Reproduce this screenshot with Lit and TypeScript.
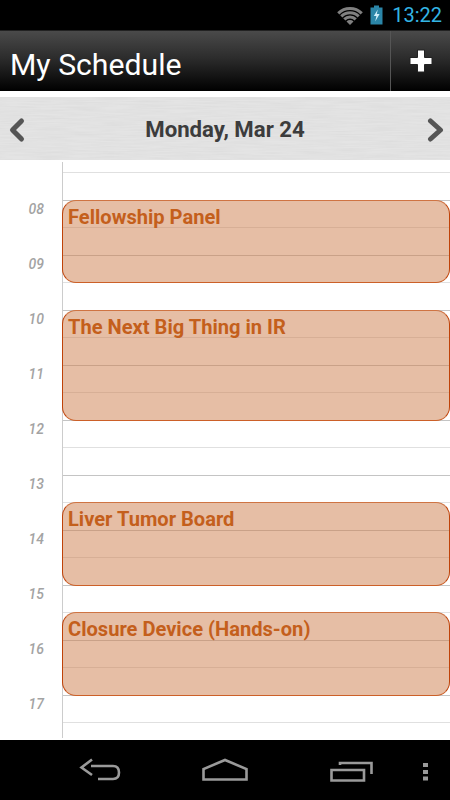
import { LitElement, html, css } from "lit";
import { customElement } from "lit/decorators.js";

const LABELS = ["08", "09", "10", "11", "12", "13", "14", "15", "16", "17"];
const EVENTS = [
  { title: "Fellowship Panel", start: 3, span: 3 },
  { title: "The Next Big Thing in IR", start: 7, span: 4 },
  { title: "Liver Tumor Board", start: 14, span: 3 },
  { title: "Closure Device (Hands-on)", start: 18, span: 3 },
];
const ROWS = 21;

@customElement("app-root")
export class AppRoot extends LitElement {
  static styles = css`
    :host { display: block; width: 450px; height: 800px; overflow: hidden; background: #fff; font-family: Roboto, "Liberation Sans", sans-serif; }
    .page { display: flex; flex-direction: column; height: 800px; }
    .status { height: 30px; background: #000; display: flex; align-items: center; justify-content: flex-end; padding-right: 8px; flex: none; }
    .wifi { margin-right: 7px; }
    .batt { margin-right: 9px; }
    .clock { color: #33b5e5; font-size: 20px; line-height: 30px; }
    .action { height: 61px; flex: none; display: flex; align-items: stretch; background: linear-gradient(#4a4a4a, #2c2c2c 45%, #000); box-sizing: border-box; border-top: 1px solid #222; }
    .title { flex: 1; color: #fff; font-size: 30.2px; line-height: 67px; padding-left: 10px; }
    .add { width: 59px; display: flex; align-items: center; justify-content: center; border-left: 1px solid #555; }
    .gap { height: 6px; flex: none; background: #fff; }
    .date { position: relative; overflow: hidden; height: 63px; flex: none; display: flex; align-items: center; justify-content: space-between; padding: 0 6px; background: #e4e4e4; }
    .texture { position: absolute; inset: 0; width: 100%; height: 100%; }
    .date span { position: relative; color: #3c3c3c; font-weight: 700; font-size: 22.2px; }
    .date svg.arrow { position: relative; }
    .cal { flex: 1; min-height: 0; overflow: hidden; display: grid; grid-template-columns: 62px 1fr; grid-template-rows: 12px repeat(${ROWS}, 27.5px); }
    .axis { grid-column: 1; grid-row: 1 / -1; border-right: 1px solid #ccc; width: 62px; height: 576px; margin-top: 2px; }
    .line { grid-column: 2; border-top: 1px solid #e0e0e0; margin-left: 1px; }
    .line.hourline { border-top-color: #c4c4c4; }
    .hour { grid-column: 1; font-size: 14px; font-style: italic; font-weight: 500; color: #a3a3a3; justify-self: end; padding-right: 18px; line-height: 17px; margin-top: 1px; }
    .event { grid-column: 2; z-index: 1; box-sizing: border-box; margin-bottom: -1px; background: rgba(205, 125, 75, 0.5); border: 1px solid #bf4208; border-top-color: #cf7443; border-bottom-color: #cc6028; border-radius: 14px; color: #c45f1c; font-weight: 700; font-size: 20.1px; line-height: 22px; padding: 5px 0 0 5px; overflow: hidden; }
    .nav { height: 60px; flex: none; background: #000; display: flex; }
    .nav svg { display: block; }
  `;

  render() {
    return html`<div class="page">
      <div class="status">
        <svg class="wifi" width="26" height="20" viewBox="0 0 26 20"><g fill="none" stroke="#808080" stroke-width="3.100"><path d="M1.300 8.300A16.500 16.500 0 0 1 24.700 8.300"/><path d="M4.300 11.300A12.300 12.300 0 0 1 21.700 11.300"/><path d="M7.300 14.300A8.100 8.100 0 0 1 18.700 14.300"/></g><path d="M9.500 16.500A5 5 0 0 1 16.500 16.500L13 20Z" fill="#808080"/></svg>
        <svg class="batt" width="13" height="20" viewBox="0 0 13 20"><path d="M4 0.500h5v2h3.500v17H0.500v-17H4z" fill="#2b86a8"/><path d="M7.800 4.500 3.800 11h2.600L5.200 16.500 9.600 9H6.800z" fill="#cfeefa"/></svg>
        <span class="clock">13:22</span>
      </div>
      <div class="action">
        <div class="title">My Schedule</div>
        <div class="add"><svg width="24" height="24" viewBox="0 0 24 24"><path d="M8.500 1h7v7.500H23v7h-7.500V23h-7v-7.500H1v-7h7.500z" fill="#fff" stroke="#222" stroke-width="1"/></svg></div>
      </div>
      <div class="gap"></div>
      <div class="date">
        <svg class="texture"><filter id="brush"><feTurbulence type="fractalNoise" baseFrequency="0.03 0.7" numOctaves="2" seed="4"/><feColorMatrix values="0 0 0 0 0.5 0 0 0 0 0.5 0 0 0 0 0.5 0.3 0 0 0 -0.09"/></filter><rect width="100%" height="100%" filter="url(#brush)"/></svg>
        <svg class="arrow" width="20" height="28" viewBox="0 0 20 28"><path d="M15.500 6 6.500 15l9 9" fill="none" stroke="#555" stroke-width="5" stroke-linecap="round" stroke-linejoin="round"/></svg>
        <span>Monday, Mar 24</span>
        <svg class="arrow" width="20" height="28" viewBox="0 0 20 28"><path d="M6.500 6l10 9-10 9" fill="none" stroke="#555" stroke-width="5" stroke-linecap="round" stroke-linejoin="round"/></svg>
      </div>
      <div class="cal">
        <div class="axis"></div>
        ${Array.from({ length: ROWS }, (_, i) => html`<div class="line ${i % 2 ? "hourline" : ""}" style="grid-row:${i + 2}"></div>`)}
        ${LABELS.map((l, i) => html`<div class="hour" style="grid-row:${3 + i * 2} / span 2">${l}</div>`)}
        ${EVENTS.map((e) => html`<div class="event" style="grid-row:${e.start} / span ${e.span}">${e.title}</div>`)}
      </div>
      <div class="nav">
        <svg width="450" height="60" viewBox="0 0 450 60" fill="none" stroke="#9a9a9a" stroke-width="2.600">
          <path d="M91 26H113Q119 26 119 32.500Q119 39 113 39H98"/><path d="M92 19.500 81.500 27.500 92 35"/>
          <path d="M203.500 39.500V29L225 20 246.500 29V39.500Z"/>
          <path d="M331.500 30H364V40.500H331.500Z"/><path d="M340 25V23H371.500V34"/>
          <g fill="#9a9a9a" stroke="none"><rect x="423" y="23" width="5" height="4"/><rect x="423" y="30" width="5" height="4"/><rect x="423" y="36.500" width="5" height="4"/></g>
        </svg>
      </div>
    </div>`;
  }
}
